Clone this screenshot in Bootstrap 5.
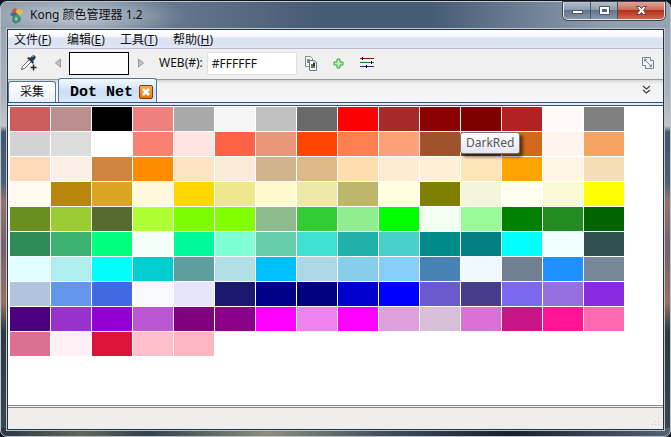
<!DOCTYPE html>
<html lang="zh-CN">
<head>
<meta charset="utf-8">
<meta name="viewport" content="width=device-width, initial-scale=1">
<title>Kong 颜色管理器 1.2</title>
<link href="https://cdn.jsdelivr.net/npm/bootstrap@5.3.0/dist/css/bootstrap.min.css" rel="stylesheet">
<style>
body { background: #10141c; font: 12px/18px "Noto Sans", "Noto Sans CJK SC", sans-serif; color: #111; padding-top: 1px; }
button, input { font: inherit; color: inherit; }
button { border: 0; background: none; padding: 0; }
svg { display: block; }
.app-window {
  min-height: calc(100vh - 1px);
  border: 1px solid #bcc6d0; border-radius: 7px; padding: 0 6px 6px;
  background:
    linear-gradient(90deg, #2b3640, #64655a 12%, #30414a 22%, #8d8d7c 40%, #3d4c59 58%, #18212e 76%, #536170) bottom / 100% 8px no-repeat,
    linear-gradient(180deg, #98a3af 0, #a8b0ba 90px, #c4c4c8 124px, #42566b 130px, #4d5f73 180px, #96736b 200px, #75616a 245px, #97725f 300px, #2b393f 330px, #39494f 100%);
}
.title-bar {
  height: 27px; margin: 0 -6px; padding: 0 5px 0 7px; border-radius: 6px 6px 0 0;
  background:
    radial-gradient(ellipse 110px 24px at 75px 14px, rgba(225,232,238,.7), rgba(190,200,210,.35) 65%, transparent),
    linear-gradient(90deg, #8796a6, #5e7188 30%, #465b74 48%, #465b74 64%, #667990 76%, #8f9dac 90%, #98a4b2);
}
.title-text { font-size: 12px; line-height: 26px; }
.caption-set { border: 1px solid #e2e7ed; border-top: 0; border-radius: 0 0 5px 5px; box-shadow: 0 0 0 1px #394655; overflow: hidden; height: 18px; }
.caption-btn { width: 27px; display: flex; align-items: center; justify-content: center; background: linear-gradient(#b5bfcb, #8e9caf 45%, #62748b 50%, #8797aa); border-right: 1px solid #475668; }
.caption-btn.close-btn { width: 46px; border: 0; background: linear-gradient(#dfa598, #cf6d59 45%, #b5301a 50%, #d2664e); }
.client { border: 1px solid #26323f; outline: 1px solid #bdc7d0; background: #fff; }
.menu-strip { height: 19px; border-bottom: 1px solid #b7bccb; background: linear-gradient(#fff, #f7f9fd 35%, #dce4f3 45%, #dbe2f2 80%, #e5e9f5); }
.menu-strip a { color: #111; text-decoration: none; padding: 0 6px; width: 53px; line-height: 20px; white-space: nowrap; }
.tool-strip { height: 31px; padding: 0 8px 2px 12px; background: #f0f0f0; border-bottom: 1px solid #999; }
.preview { width: 60px; height: 23px; margin-left: 7px; background: #fff; border: 1px solid #000; }
.hex-label { margin-left: 14px; }
.hex-box { width: 90px; height: 23px; border: 1px solid #dedfe2; border-radius: 2px; padding: 0 4px; background: #fff; outline: 0; }
.tab-strip { height: 26px; background: linear-gradient(#d7d7d7, #f2f2f2 4px, #f6f6f6 100%); border-bottom: 1px solid #315477; padding-bottom: 3px; }
.tab-band { height: 4px; border: solid #315477; border-width: 1px 0; background: #dceafa; margin-top: -4px; position: relative; }
.doc-tab { border: 1px solid #54779c; border-bottom: 0; border-radius: 3px 3px 0 0; background: linear-gradient(#fff, #e8eff8); height: 21px; width: 48px; font-size: 12px; line-height: 20px; }
.doc-tab.current { height: 24px; width: 99px; margin-left: 2px; background: linear-gradient(#f5faff, #c9def6 55%, #dceafa); padding: 2px 3px 0 11px; }
.current-name { font: bold 15px/24px "Liberation Mono", monospace; color: #000; white-space: pre; padding-top: 2px; }
.close-tab { width: 14px; height: 14px; border: 1px solid #7d3c06; border-radius: 2px; background: linear-gradient(#f6ae50, #e27a13); display: flex; align-items: center; justify-content: center; }
.palette { padding: 1px 1px 0 2px; gap: 1px; height: calc(100vh - 138px); min-height: 250px; }
.swatch { width: 40px; height: 24px; position: relative; }
.swatch-tip { position: absolute; z-index: 2; left: 100%; top: 100%; margin-top: 1px; padding: 0 5px; height: 22px; line-height: 20px; font-size: 12px; color: #575757; background: linear-gradient(#fff, #e4e5f0); border: 1px solid #767676; border-radius: 3px; box-shadow: 3px 3px 3px rgba(0,0,0,.55); }
.status-strip { height: 24px; border-top: 3px double #898989; background: #f0eeed; padding: 0 2px 2px; }
</style>
<script src="https://cdn.jsdelivr.net/npm/bootstrap@5.3.0/dist/js/bootstrap.bundle.min.js"></script>
</head>
<body>
<main class="app-window">
  <header class="title-bar d-flex align-items-start">
    <svg class="mt-1 me-1" width="18" height="18" viewBox="0 0 18 18" aria-hidden="true">
      <path d="M7 2 4 4l1 4 3-1 1-4z" fill="#d0573c"/><path d="m9 3 5 1 1 3-4 2-3-2z" fill="#e2bd4c"/><path d="M4 6 2 9l4 2 2-4z" fill="#496a97"/>
      <path d="M8 7c-1 3-4 4-3 8 1 3 6 2 7-1 1-3-2-4-4-7z" fill="#46a079" stroke="#286c5d"/><path d="M8 11c-2 3 0 4 1 3s1-1-1-3z" fill="#9bd5b5"/>
    </svg>
    <h1 class="title-text fw-normal m-0">Kong 颜色管理器 1.2</h1>
    <div class="caption-set d-flex ms-auto">
      <button class="caption-btn" type="button" aria-label="最小化"><svg width="13" height="10"><rect x="1.500" y="4.500" width="10" height="3" fill="#fff" stroke="#49566a"/></svg></button>
      <button class="caption-btn" type="button" aria-label="最大化"><svg width="13" height="11"><path fill-rule="evenodd" d="M1.500 1.500h10v8h-10zM4.500 4.500h4v2h-4z" fill="#fff" stroke="#49566a"/></svg></button>
      <button class="caption-btn close-btn" type="button" aria-label="关闭"><svg width="13" height="11"><path d="M1.500 1.500h3l2 2 2-2h3L8.500 5.500l3 4h-3l-2-2-2 2h-3l3-4z" fill="#fff" stroke="#58414a"/></svg></button>
    </div>
  </header>
  <div class="client">
    <nav class="menu-strip d-flex" aria-label="菜单">
      <a href="#">文件(<u>F</u>)</a><a href="#">编辑(<u>E</u>)</a><a href="#">工具(<u>T</u>)</a><a href="#">帮助(<u>H</u>)</a>
    </nav>
    <div class="tool-strip d-flex align-items-center">
      <button type="button" aria-label="取色"><svg width="18" height="18" viewBox="0 0 18 18"><path d="m9.500 5.500-7 7-1 3 3-1 7-7" fill="#fff" stroke="#59616c"/><path d="m7 4 6 6 1-2-1-1 2-2c2-2-1-5-3-3l-2 2-1-1z" fill="#27374a"/><path d="m12 3 2-1" stroke="#8fa4b7"/><path d="M13.500 10.500v6M10.500 13.500h6" stroke="#25282c" stroke-width="1.500"/></svg></button>
      <button class="ms-3" type="button" aria-label="上一个"><svg width="8" height="10"><path d="M6.500 1v8l-5-4z" fill="#c4c4c4" stroke="#999"/></svg></button>
      <div class="preview"></div>
      <button class="ms-2" type="button" aria-label="下一个"><svg width="8" height="10"><path d="M1.500 1v8l5-4z" fill="#c4c4c4" stroke="#999"/></svg></button>
      <label class="hex-label" for="hex">WEB(#):</label>
      <input class="hex-box ms-1" id="hex" type="text" value="#FFFFFF">
      <button class="ms-2" type="button" aria-label="复制"><svg width="12" height="15"><path d="M.5.500h5l2 2v8h-7z" fill="#f3f5ea" stroke="#858a91"/><path d="M2 3h3v4H2z" fill="#809267"/><path d="M4.500 4.500h5l2 2v8h-7z" fill="#fafafa" stroke="#70728e"/><path d="M9 4v3h3" fill="none" stroke="#9495aa"/><path d="M6 8h4v4H6z" fill="#6a7450"/><path d="M8 7h2v3H8z" fill="#333"/></svg></button>
      <button class="ms-3" type="button" aria-label="添加"><svg width="11" height="11"><path d="M4 1h3v3h3v3H7v3H4V7H1V4h3z" fill="#bff0b5" stroke="#36a447"/></svg></button>
      <button class="ms-3" type="button" aria-label="调节"><svg width="14" height="12"><path d="M0 1.500h14" stroke="#731b32"/><path d="M0 5.500h14" stroke="#286c2c"/><path d="M0 9.500h14" stroke="#2525a0"/><path d="M2.500 0v3M11.500 4v3M6.500 8v3" stroke="#000"/></svg></button>
      <button class="ms-auto" type="button" aria-label="迷你模式"><svg width="13" height="13" fill="none" stroke="#758395"><path d="M3.500 8.500h-3v-8h8v3M8.500 3.500h3v8h-8v-3"/><path d="M2.500 4.500v-2h2M2.500 2.500l7 7M7.500 9.500h2v-2"/></svg></button>
    </div>
    <div class="tab-strip d-flex align-items-end">
      <button class="doc-tab" type="button">采集</button>
      <div class="doc-tab current d-flex align-items-center justify-content-between">
        <span class="current-name">Dot Net</span>
        <button class="close-tab" type="button" aria-label="关闭标签"><svg width="8" height="8"><path d="m1 1 6 6M7 1 1 7" stroke="#fff" stroke-width="2.500"/></svg></button>
      </div>
      <button class="ms-auto me-2 mb-1 pb-1 pe-1" type="button" aria-label="更多"><svg width="9" height="9" fill="none" stroke="#444" stroke-width="1.300"><path d="m1 1 3.500 3L8 1M1 5l3.500 3L8 5"/></svg></button>
    </div>
    <div class="tab-band"></div>
    <section class="palette d-flex flex-wrap align-content-start" id="palette" aria-label="Dot Net"></section>
    <footer class="status-strip d-flex align-items-end justify-content-end">
      <svg width="10" height="10" fill="#c9c6c3" aria-hidden="true"><path d="M7 1h1v1H7zM7 4h1v1H7zM7 7h1v1H7zM4 4h1v1H4zM4 7h1v1H4zM1 7h1v1H1z"/></svg>
    </footer>
  </div>
</main>
<script>
const names = `IndianRed RosyBrown Black LightCoral DarkGray WhiteSmoke Silver DimGray Red Brown DarkRed Maroon Firebrick Snow Gray
LightGray Gainsboro White Salmon MistyRose Tomato DarkSalmon OrangeRed Coral LightSalmon Sienna SaddleBrown Chocolate SeaShell SandyBrown
PeachPuff Linen Peru DarkOrange Bisque AntiqueWhite Tan BurlyWood NavajoWhite BlanchedAlmond PapayaWhip Moccasin Orange OldLace Wheat
FloralWhite DarkGoldenrod Goldenrod Cornsilk Gold Khaki LemonChiffon PaleGoldenrod DarkKhaki LightYellow Olive Beige Ivory LightGoldenrodYellow Yellow
OliveDrab YellowGreen DarkOliveGreen GreenYellow LawnGreen Chartreuse DarkSeaGreen LimeGreen LightGreen Lime Honeydew PaleGreen Green ForestGreen DarkGreen
SeaGreen MediumSeaGreen SpringGreen MintCream MediumSpringGreen Aquamarine MediumAquamarine Turquoise LightSeaGreen MediumTurquoise DarkCyan Teal Cyan Azure DarkSlateGray
LightCyan PaleTurquoise Aqua DarkTurquoise CadetBlue PowderBlue DeepSkyBlue LightBlue SkyBlue LightSkyBlue SteelBlue AliceBlue SlateGray DodgerBlue LightSlateGray
LightSteelBlue CornflowerBlue RoyalBlue GhostWhite Lavender MidnightBlue DarkBlue Navy MediumBlue Blue SlateBlue DarkSlateBlue MediumSlateBlue MediumPurple BlueViolet
Indigo DarkOrchid DarkViolet MediumOrchid Purple DarkMagenta Fuchsia Violet Magenta Plum Thistle Orchid MediumVioletRed DeepPink HotPink
PaleVioletRed LavenderBlush Crimson Pink LightPink`.split(/\s+/);
const palette = document.getElementById('palette');
for (const name of names) {
  const swatch = document.createElement('button');
  swatch.type = 'button';
  swatch.className = 'swatch';
  swatch.style.backgroundColor = name;
  swatch.setAttribute('aria-label', name);
  if (name === 'DarkRed') {
    const tip = document.createElement('span');
    tip.className = 'swatch-tip';
    tip.textContent = name;
    swatch.append(tip);
  }
  palette.append(swatch);
}
</script>
</body>
</html>
